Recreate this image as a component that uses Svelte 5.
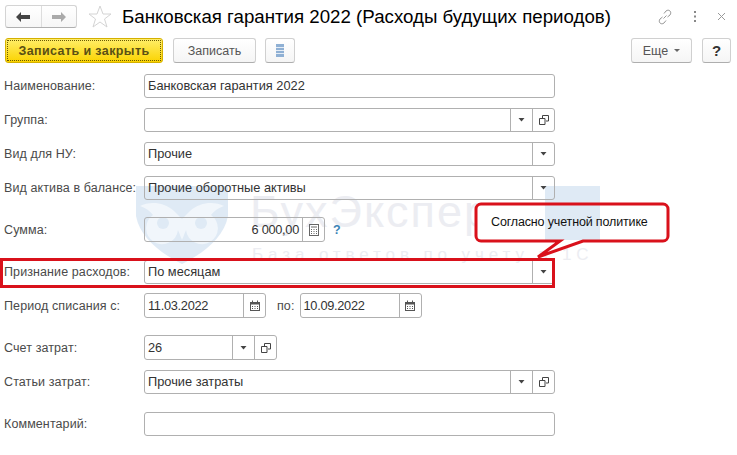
<script lang="ts">
	// form rows: label, value, buttons
	const rows = [
		{ label: 'Наименование:', value: 'Банковская гарантия 2022', btns: [] },
		{ label: 'Группа:', value: '', btns: ['drop', 'open'] },
		{ label: 'Вид для НУ:', value: 'Прочие', btns: ['drop'] },
		{ label: 'Вид актива в балансе:', value: 'Прочие оборотные активы', btns: ['drop'] }
	];
</script>

{#snippet dropIcon()}
	<svg width="7" height="4" viewBox="0 0 7 4"><path d="M.5 0h6L3.500 3.500z" fill="#444" /></svg>
{/snippet}

{#snippet openIcon()}
	<svg width="10" height="10" viewBox="0 0 10 10" fill="none" stroke="#444"><path d="M3.500 3V.5h6v5.500H7" /><path d="M.5 3.500h5.500v6H.5z" /></svg>
{/snippet}

{#snippet calcIcon()}
	<svg width="10" height="12" viewBox="0 0 10 12" fill="none" stroke="#666"><rect x=".5" y=".5" width="9" height="11" /><path d="M2 3h6M2 5.500h1M4.500 5.500h1M7 5.500h1M2 7.500h1M4.500 7.500h1M7 7.500h1M2 9.500h1M4.500 9.500h1M7 9.500h1" /></svg>
{/snippet}

{#snippet dateIcon()}
	<svg width="12" height="12" viewBox="0 0 12 12"><rect x="1.500" y="2.500" width="9" height="8" fill="none" stroke="#555" /><rect x="1" y="2" width="10" height="2.500" fill="#555" /><path d="M3.500 0.500v2M8.500 .5v2" stroke="#555" /><path d="M3 6.500h1M5.500 6.500h1M8 6.500h1M3 8.500h1M5.500 8.500h1M8 8.500h1" stroke="#555" /></svg>
{/snippet}

{#snippet btns(list: string[])}
	{#each list as b}
		<span class="fbtn">
			{#if b === 'drop'}{@render dropIcon()}
			{:else if b === 'open'}{@render openIcon()}
			{:else if b === 'calc'}{@render calcIcon()}
			{:else}{@render dateIcon()}{/if}
		</span>
	{/each}
{/snippet}

<div class="page">
	<div class="watermark">
		<svg class="shield" width="92" height="78" viewBox="0 0 92 78">
			<path d="M0 0h92v30C88 52 66 68 46 78 26 68 4 52 0 30z" fill="#dfeaf5" />
			<path d="M4 20c10-5 24-4 34 5l8 8 8-8c10-9 24-10 34-5-6 2-10 5-13 9a16 16 0 1 1-25 15l-4 10-4-10a16 16 0 1 1-25-15c-3-4-7-7-13-9z" fill="#f1f6fb" />
			<circle cx="27" cy="37" r="6" fill="#dfeaf5" />
			<circle cx="65" cy="37" r="6" fill="#dfeaf5" />
		</svg>
		<span class="wm-big">БухЭксперт</span>
		<span class="wm-small">База ответов по учету в 1С</span>
		<span class="wm-box"></span>
	</div>

	<header class="title-row">
		<div class="nav">
			<span class="nav-btn">
				<svg width="14" height="10" viewBox="0 0 14 10"><path d="M0 5l5-5v3h9v4H5v3z" fill="#444" /></svg>
			</span>
			<span class="nav-btn">
				<svg width="14" height="10" viewBox="0 0 14 10"><path d="M14 5L9 0v3H0v4h9v3z" fill="#aaa" /></svg>
			</span>
		</div>
		<svg class="star" width="24" height="23" viewBox="0 0 24 23"><path d="M12 1l3 8h8l-6.500 5 2.500 8-7-5-7 5 2.500-8L1 9h8z" fill="none" stroke="#d4d4d4" /></svg>
		<h1>Банковская гарантия 2022 (Расходы будущих периодов)</h1>
		<div class="win-tools">
			<svg width="16" height="16" viewBox="0 0 16 16" fill="none" stroke="#999"><path d="M6.500 9.500l3-3M7 4.500l2-2.500c1.500-1.200 3-1 4 0s1 2.500 0 4l-2.500 2M9 11.500L7 14c-1.500 1.200-3 1-4 0s-1-2.500 0-4l2.500-2" /></svg>
			<svg width="4" height="13" viewBox="0 0 4 13"><path d="M1 1h2v2H1zM1 5.500h2v2H1zM1 10h2v2H1z" fill="#888" /></svg>
			<svg width="9" height="9" viewBox="0 0 9 9"><path d="M1 1l7 7M8 1L1 8" stroke="#999" /></svg>
		</div>
	</header>

	<div class="toolbar">
		<button class="btn primary"><span>Записать и закрыть</span></button>
		<button class="btn save">Записать</button>
		<button class="btn list">
			<svg width="8" height="13" viewBox="0 0 8 13"><rect width="8" height="13" fill="#8fb0d4" /><path d="M0 3.500h8M0 6.500h8M0 9.500h8" stroke="#e4ecf5" /></svg>
		</button>
		<span class="grow"></span>
		<button class="btn more">Еще <svg width="6" height="3" viewBox="0 0 6 3"><path d="M0 0h6L3 3z" fill="#666" /></svg></button>
		<button class="btn help">?</button>
	</div>

	<form class="form">
		{#each rows as r, i}
			<div class="row" class:first={i === 0}>
				<span class="label">{r.label}</span>
				<div class="field wide">
					<span class="value">{r.value}</span>
					{@render btns(r.btns)}
				</div>
			</div>
		{/each}

		<div class="row tall gap-sum">
			<span class="label">Сумма:</span>
			<div class="field sum">
				<span class="value digits right">6 000,00</span>
				{@render btns(['calc'])}
			</div>
			<span class="hint">?</span>
		</div>

		<div class="row gap-rec">
			<span class="label">Признание расходов:</span>
			<div class="field wide">
				<span class="value">По месяцам</span>
				{@render btns(['drop'])}
			</div>
			<span class="red-frame"></span>
		</div>

		<div class="row tall gap-period">
			<span class="label">Период списания с:</span>
			<div class="field date">
				<span class="value digits">11.03.2022</span>
				{@render btns(['date'])}
			</div>
			<span class="to">по:</span>
			<div class="field date">
				<span class="value digits">10.09.2022</span>
				{@render btns(['date'])}
			</div>
		</div>

		<div class="row tall gap-acc">
			<span class="label">Счет затрат:</span>
			<div class="field acc">
				<span class="value">26</span>
				{@render btns(['drop', 'open'])}
			</div>
		</div>

		<div class="row gap-cost">
			<span class="label">Статьи затрат:</span>
			<div class="field wide">
				<span class="value">Прочие затраты</span>
				{@render btns(['drop', 'open'])}
			</div>
		</div>

		<div class="row gap-comment">
			<span class="label">Комментарий:</span>
			<div class="field wide"><span class="value"></span></div>
		</div>
	</form>

	<div class="callout">
		<svg width="198" height="58" viewBox="0 0 198 58">
			<path d="M7 2h182a5 5 0 0 1 5 5v27a5 5 0 0 1-5 5H109L64 55 86 39H7a5 5 0 0 1-5-5V7a5 5 0 0 1 5-5z" fill="#fff" />
			<rect x="71" y="3" width="55" height="35" fill="#dfeaf5" />
			<path d="M7 2h182a5 5 0 0 1 5 5v27a5 5 0 0 1-5 5H109L64 55 86 39H7a5 5 0 0 1-5-5V7a5 5 0 0 1 5-5z" fill="none" stroke="#d9111b" stroke-width="3" />
		</svg>
		<span>Согласно учетной политике</span>
	</div>
</div>

<style>
	:global(body) {
		margin: 0;
		background: #fff;
	}

	.page {
		position: relative;
		width: 737px;
		height: 455px;
		overflow: hidden;
		background: #fff;
		font-family: 'Liberation Sans', Arial, sans-serif;
		font-size: 12.500px;
		color: #333;
	}

	.title-row {
		display: flex;
		align-items: center;
		height: 29px;
		padding: 2px 0 0 5px;
	}

	.nav {
		display: flex;
		width: 72px;
		height: 23px;
		box-sizing: border-box;
		border: 1px solid #d4d4d4;
		border-bottom-color: #b0b0b0;
		border-radius: 3px;
		background: linear-gradient(#fff, #f6f6f6);
	}

	.nav-btn {
		flex: 1;
		display: flex;
		align-items: center;
		justify-content: center;
	}

	.nav-btn + .nav-btn {
		border-left: 1px solid #ddd;
	}

	.star {
		margin-left: 11px;
	}

	h1 {
		margin: 0 0 0 10px;
		font-size: 18.700px;
		font-weight: 400;
		color: #000;
		white-space: nowrap;
	}

	.win-tools {
		display: flex;
		align-items: center;
		margin-left: 46px;
		gap: 20px;
	}

	.toolbar {
		display: flex;
		align-items: stretch;
		height: 25px;
		margin-top: 7px;
		padding: 0 6px 0 5px;
	}

	.grow {
		flex: 1;
	}

	.btn {
		display: flex;
		align-items: center;
		justify-content: center;
		box-sizing: border-box;
		padding: 0;
		border: 1px solid #d0d0d0;
		border-bottom-color: #aeaeae;
		border-radius: 3px;
		background: linear-gradient(#fff, #f5f5f5);
		font: inherit;
		color: #555;
	}

	.primary {
		width: 158px;
		padding: 1px;
		border-color: #d4b000;
		background: linear-gradient(#ffee6a, #fbd300);
		font-weight: 700;
		color: #5a5014;
	}

	.primary span {
		display: flex;
		align-items: center;
		justify-content: center;
		width: 100%;
		height: 100%;
		border: 1px dotted #6b5a00;
		box-sizing: border-box;
		letter-spacing: 0.4px;
	}

	.save {
		width: 83px;
		margin-left: 10px;
	}

	.list {
		width: 30px;
		margin-left: 9px;
	}

	.more {
		width: 61px;
		gap: 6px;
	}

	.help {
		width: 29px;
		margin-left: 10px;
		font-size: 15px;
		font-weight: 700;
		color: #333;
	}

	.form {
		display: flex;
		flex-direction: column;
		margin-top: 11px;
		padding-left: 4px;
	}

	.row {
		position: relative;
		display: flex;
		align-items: center;
		height: 24px;
		margin-top: 10px;
	}

	.row.tall {
		height: 25px;
	}

	.row.first {
		margin-top: 0;
	}

	.gap-sum {
		margin-top: 17px;
	}

	.gap-rec {
		margin-top: 18px;
	}

	.gap-period {
		margin-top: 9px;
	}

	.gap-acc {
		margin-top: 17px;
	}

	.gap-cost {
		margin-top: 10px;
	}

	.gap-comment {
		margin-top: 18px;
	}

	.label {
		flex: none;
		width: 140px;
		white-space: nowrap;
		color: #4a4a4a;
		letter-spacing: 0.1px;
	}

	.field {
		flex: none;
		display: flex;
		align-items: stretch;
		box-sizing: border-box;
		height: 100%;
		border: 1px solid #b0b0b0;
		border-radius: 3px;
	}

	.wide {
		width: 411px;
	}

	.sum {
		width: 181px;
	}

	.date {
		width: 122px;
	}

	.acc {
		width: 133px;
	}

	.value {
		flex: 1;
		min-width: 0;
		padding: 0 3px;
		line-height: 22px;
		font-size: 12.800px;
		white-space: nowrap;
		color: #333;
	}

	.tall .value {
		line-height: 23px;
	}

	.value.digits {
		letter-spacing: -0.3px;
	}

	.value.right {
		text-align: right;
	}

	.fbtn {
		flex: none;
		display: flex;
		align-items: center;
		justify-content: center;
		width: 21px;
		border-left: 1px solid #b0b0b0;
	}

	.hint {
		margin-left: 8px;
		font-weight: 700;
		color: #3b83b5;
	}

	.to {
		margin: 0 5px 0 11px;
		color: #4a4a4a;
		letter-spacing: 0.1px;
	}

	.red-frame {
		position: absolute;
		left: -4px;
		right: 182px;
		top: -2px;
		bottom: -4px;
		border: 3px solid #d9111b;
		pointer-events: none;
	}

	.watermark {
		position: absolute;
		inset: 0;
	}

	.shield {
		position: absolute;
		left: 136px;
		top: 186px;
	}

	.wm-big {
		position: absolute;
		left: 250px;
		top: 186px;
		font-size: 45px;
		letter-spacing: 2px;
		color: #ecedf2;
	}

	.wm-small {
		position: absolute;
		left: 252px;
		top: 245px;
		font-size: 17px;
		letter-spacing: 4.900px;
		color: #ecedf2;
		white-space: nowrap;
	}

	.wm-box {
		position: absolute;
		left: 545px;
		top: 186px;
		width: 55px;
		height: 52px;
		background: #dfeaf5;
	}

	.callout {
		position: absolute;
		left: 474px;
		top: 202px;
		width: 198px;
		height: 58px;
	}

	.callout svg {
		display: block;
	}

	.callout span {
		position: absolute;
		left: 17px;
		top: 13px;
		font-size: 12.500px;
		white-space: nowrap;
		color: #111;
		letter-spacing: -0.15px;
	}
</style>
